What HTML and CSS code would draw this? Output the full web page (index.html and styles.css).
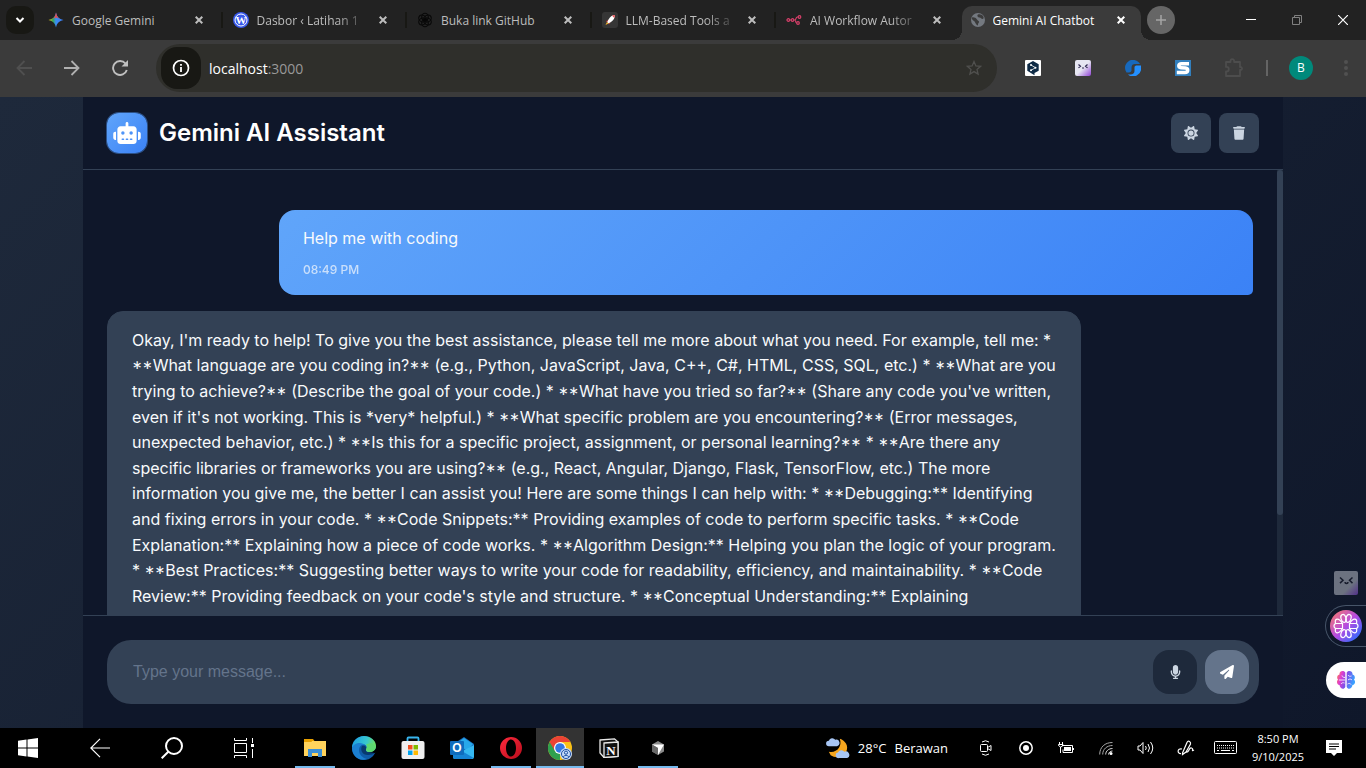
FILE: index.html
```html
<!DOCTYPE html>
<html lang="en">
<head>
<meta charset="utf-8">
<title>Gemini AI Chatbot</title>
<link rel="stylesheet" href="styles.css">
</head>
<body>
<div class="tabstrip">
  <button class="tab-search" aria-label="Search tabs"><svg width="10" height="8" viewBox="0 0 10 8"><path d="M1.500 2 5 5.500 8.500 2" fill="none" stroke="#fff" stroke-width="2"/></svg></button>
  <div class="tabs">
    <div class="tab">
      <svg class="favicon" viewBox="0 0 16 16"><defs><linearGradient id="gem" x1="0" y1="0" x2="1" y2="0"><stop offset="0" stop-color="#f5c518"/><stop offset=".3" stop-color="#34a853"/><stop offset=".5" stop-color="#3b8cf7"/><stop offset="1" stop-color="#3b7bf0"/></linearGradient></defs><path d="M8 .5C9 5 11 7 15.500 8 11 9 9 11 8 15.500 7 11 5 9 .5 8 5 7 7 5 8 .5z" fill="url(#gem)"/><path d="M8 .5C9 5 10 6 12 7L8 5.500 4.500 7C6.500 6 7.500 4 8 .5z" fill="#ea4a4a"/></svg>
      <span class="tab-title">Google Gemini</span>
      <button class="tab-close" aria-label="Close tab"><svg width="8" height="8" viewBox="0 0 8 8"><path d="M.7.7l6.600 6.600M7.300.7L.7 7.300"/></svg></button>
    </div>
    <div class="tab">
      <svg class="favicon" viewBox="0 0 16 16"><circle cx="8" cy="8" r="8" fill="#3858e9"/><circle cx="8" cy="8" r="6" fill="none" stroke="#fff" stroke-width="1"/><text x="8" y="12" text-anchor="middle" font-size="11" font-weight="700" font-family="Liberation Serif, serif" fill="#fff">W</text></svg>
      <span class="tab-title fade">Dasbor ‹ Latihan 1</span>
      <button class="tab-close" aria-label="Close tab"><svg width="8" height="8" viewBox="0 0 8 8"><path d="M.7.7l6.600 6.600M7.300.7L.7 7.300"/></svg></button>
    </div>
    <div class="tab">
      <svg class="favicon" viewBox="0 0 16 16"><g fill="none" stroke="#080808" stroke-width="1.100"><ellipse cx="8" cy="5" rx="3.300" ry="3.800"/><ellipse cx="8" cy="5" rx="3.300" ry="3.800" transform="rotate(60 8 8)"/><ellipse cx="8" cy="5" rx="3.300" ry="3.800" transform="rotate(120 8 8)"/><ellipse cx="8" cy="5" rx="3.300" ry="3.800" transform="rotate(180 8 8)"/><ellipse cx="8" cy="5" rx="3.300" ry="3.800" transform="rotate(240 8 8)"/><ellipse cx="8" cy="5" rx="3.300" ry="3.800" transform="rotate(300 8 8)"/></g></svg>
      <span class="tab-title">Buka link GitHub</span>
      <button class="tab-close" aria-label="Close tab"><svg width="8" height="8" viewBox="0 0 8 8"><path d="M.7.7l6.600 6.600M7.300.7L.7 7.300"/></svg></button>
    </div>
    <div class="tab">
      <svg class="favicon" viewBox="0 0 16 16"><rect width="16" height="16" rx="3" fill="#363636"/><path d="M13 3c-3 0-5 2-6.500 4.500L5 10l1.500 1.500L9 10c2.500-2 4-4 4-7z" fill="#fff"/><path d="M13 3l-3 .6L12.300 6z" fill="#e5484d"/><path d="M6 7.500L4 9.500 5 10zM8.500 10.500L7 12.500l-.5-1z" fill="#d33"/><path d="M5 10l1.500 1.500L3.500 13z" fill="#f5b52e"/></svg>
      <span class="tab-title fade">LLM-Based Tools a</span>
      <button class="tab-close" aria-label="Close tab"><svg width="8" height="8" viewBox="0 0 8 8"><path d="M.7.7l6.600 6.600M7.300.7L.7 7.300"/></svg></button>
    </div>
    <div class="tab">
      <svg class="favicon" viewBox="0 0 16 16"><g fill="none" stroke="#d9406b" stroke-width="1.200"><circle cx="2.300" cy="8" r="1.300"/><circle cx="6.500" cy="8" r="1.300"/><circle cx="13.500" cy="5" r="1.300"/><circle cx="12" cy="11" r="1.300"/><path d="M3.600 8h1.600M7.800 8h1c1.500 0 .8-3 2.500-3h.9M8.800 8c1.200 0 .5 3 1.900 3"/></g></svg>
      <span class="tab-title fade">AI Workflow Autor</span>
      <button class="tab-close" aria-label="Close tab"><svg width="8" height="8" viewBox="0 0 8 8"><path d="M.7.7l6.600 6.600M7.300.7L.7 7.300"/></svg></button>
    </div>
    <div class="tab tab-active">
      <svg class="favicon" viewBox="0 0 16 16"><circle cx="7" cy="8" r="7" fill="#747980"/><path d="M1 5.500C3 5 5 6 6 7.500s1.500 1 2 2-1 1.500-1 3-1 1-2-.5-1-2.500-2-3-2.500-2-2-3.500zM7 2.500c1.500-.8 4 0 5 1.500s.8 3-.5 3-1.500-1.500-3-1.500-3-2-1.500-3z" fill="#3b3b3b"/></svg>
      <span class="tab-title">Gemini AI Chatbot</span>
      <button class="tab-close" aria-label="Close tab"><svg width="8" height="8" viewBox="0 0 8 8"><path d="M.7.7l6.600 6.600M7.300.7L.7 7.300"/></svg></button>
    </div>
  </div>
  <button class="new-tab" aria-label="New tab"><svg width="10" height="10" viewBox="0 0 10 10"><path d="M5 0v10M0 5h10" stroke="#a5a5a5" stroke-width="1.500"/></svg></button>
  <div class="window-controls">
    <button aria-label="Minimize"><svg width="10" height="10" viewBox="0 0 10 10"><path d="M0 4.500h10" stroke="#fff"/></svg></button>
    <button aria-label="Restore"><svg width="10" height="10" viewBox="0 0 10 10"><path d="M.5 2.500h7v7h-7zM2.500 2.500v-2h7v7h-2" fill="none" stroke="#808080"/></svg></button>
    <button aria-label="Close"><svg width="10" height="10" viewBox="0 0 10 10"><path d="M0 0l10 10M10 0L0 10" stroke="#fff" stroke-width="1.200"/></svg></button>
  </div>
</div>

<div class="toolbar">
  <button class="nav" aria-label="Back"><svg width="16" height="16" viewBox="0 0 16 16" fill="none" stroke="#505050" stroke-width="1.800"><path d="M16 8H1.500M8.500 1L1.500 8l7 7"/></svg></button>
  <button class="nav" aria-label="Forward"><svg width="16" height="16" viewBox="0 0 16 16" fill="none" stroke="#b0b0b0" stroke-width="1.800"><path d="M0 8h14.500M7.500 1l7 7-7 7"/></svg></button>
  <button class="nav" aria-label="Reload"><svg width="16" height="16" viewBox="0 0 16 16"><path d="M14.800 10A7 7 0 1 1 13.500 3.500" fill="none" stroke="#c0c0c0" stroke-width="1.900"/><path d="M16 0v6.500H9.500z" fill="#c0c0c0"/></svg></button>
  <div class="omnibox">
    <button class="site-info" aria-label="Site information"><svg width="18" height="18" viewBox="0 0 18 18"><circle cx="9" cy="9" r="7.500" fill="none" stroke="#fff" stroke-width="1.700"/><path d="M9 8v5M9 5v1.800" stroke="#fff" stroke-width="1.800"/></svg></button>
    <div class="url">localhost<span>:3000</span></div>
    <button class="star" aria-label="Bookmark"><svg width="16" height="16" viewBox="0 0 16 16"><path d="M8 1.500l1.900 4.400 4.700.4-3.600 3.100 1.100 4.700L8 11.600l-4.100 2.500L5 9.400 1.400 6.300l4.700-.4z" fill="none" stroke="#50504e" stroke-width="1.300"/></svg></button>
  </div>
  <div class="extensions">
    <button aria-label="Translate"><svg width="16" height="16" viewBox="0 0 16 16"><rect width="16" height="16" rx="1" fill="#fff"/><path d="M8 1l5.700 3.200v6.500L9.500 13v2.300L2.300 10.700V4.200z" fill="#0f2b46"/><path d="M6 5l4.500 2.700L6 10.300" fill="none" stroke="#fff" stroke-width=".8"/><circle cx="6" cy="5" r="1" fill="#fff"/><circle cx="10.500" cy="7.700" r="1" fill="#fff"/><circle cx="6" cy="10.200" r="1" fill="#fff"/></svg></button>
    <button aria-label="Companion"><svg width="16" height="16" viewBox="0 0 16 16"><defs><linearGradient id="face" x1="0" y1="0" x2="1" y2="1"><stop offset=".5" stop-color="#e6e6f2"/><stop offset="1" stop-color="#9143d6"/></linearGradient></defs><rect width="16" height="16" rx="2" fill="url(#face)"/><path d="M3.500 4.500l2 1.700-2 1.700M12.500 4.500l-2 1.700 2 1.700M7 8h2" fill="none" stroke="#2d2750" stroke-width="1.200"/></svg></button>
    <button aria-label="Sync"><svg width="16" height="16" viewBox="0 0 16 16"><path d="M14 2.500A8 8 0 0 0 .5 10.500L1.500 12.500H4C5.500 12.500 6.500 11.500 6.500 10V7.500C6.500 5 8 4 10 4H15z" fill="#1769bd"/><path d="M16 5.500H11.500C10 5.500 9.500 6.500 9.500 7.500V11c0 2-1.500 3.500-4 3.500H3A8 8 0 0 0 16 7z" fill="#2490ff"/></svg></button>
    <button aria-label="Notes"><svg width="16" height="16" viewBox="0 0 16 16"><rect width="16" height="16" fill="#327fbd"/><path d="M14 3.800H6.500C3 3.800 3 7.500 6 7.700l4.500.4c3 .3 3 4.400-.5 4.400H1.800" fill="none" stroke="#fff" stroke-width="3.500"/></svg></button>
    <button aria-label="Extensions"><svg width="20" height="20" viewBox="0 0 20 20"><path d="M3 4h4.500V3a1.800 1.800 0 0 1 3.600 0v1H17v5h1a1.600 1.600 0 0 1 0 3h-1v6H3v-4.500h.5a2.300 2.300 0 0 0 0-4.600H3z" fill="none" stroke="#4d4d4d" stroke-width="1.800" stroke-linejoin="round"/></svg></button>
  </div>
  <span class="divider"></span>
  <button class="profile" aria-label="Profile"><span>B</span></button>
  <button class="menu" aria-label="Menu"><svg width="4" height="16" viewBox="0 0 4 16" fill="#515151"><circle cx="2" cy="2" r="2"/><circle cx="2" cy="8" r="2"/><circle cx="2" cy="14" r="2"/></svg></button>
</div>

<main class="page">
  <section class="app">
    <header class="app-header">
      <div class="brand">
        <span class="logo"><svg width="28" height="22" viewBox="0 0 640 512" fill="#fff"><path d="M320 0c17.700 0 32 14.300 32 32V96H472c39.800 0 72 32.200 72 72V440c0 39.800-32.200 72-72 72H168c-39.800 0-72-32.200-72-72V168c0-39.800 32.200-72 72-72H288V32c0-17.700 14.300-32 32-32zM208 384c-8.800 0-16 7.200-16 16s7.200 16 16 16h32c8.800 0 16-7.200 16-16s-7.200-16-16-16H208zm96 0c-8.800 0-16 7.200-16 16s7.200 16 16 16h32c8.800 0 16-7.200 16-16s-7.200-16-16-16H304zm96 0c-8.800 0-16 7.200-16 16s7.200 16 16 16h32c8.800 0 16-7.200 16-16s-7.200-16-16-16H400zM264 256a40 40 0 1 0 -80 0 40 40 0 1 0 80 0zm152 40a40 40 0 1 0 0-80 40 40 0 1 0 0 80zM48 224H64V416H48c-26.500 0-48-21.500-48-48V272c0-26.500 21.500-48 48-48zm544 0c26.500 0 48 21.500 48 48v96c0 26.500-21.500 48-48 48H576V224h16z"/></svg></span>
        <h1>Gemini AI Assistant</h1>
      </div>
      <div class="header-actions">
        <button aria-label="Toggle theme"><svg width="14" height="14" viewBox="0 0 512 512" fill="#cbd5e1"><path d="M361.500 1.200c5 2.100 8.600 6.600 9.600 11.900L391 121l107.900 19.800c5.300 1 9.800 4.600 11.900 9.600s1.500 10.700-1.600 15.200L446.900 256l62.300 90.300c3.100 4.500 3.700 10.200 1.600 15.200s-6.600 8.600-11.900 9.600L391 391 371.100 498.900c-1 5.300-4.600 9.800-9.600 11.900s-10.700 1.500-15.200-1.600L256 446.900l-90.300 62.300c-4.500 3.100-10.200 3.700-15.200 1.600s-8.600-6.600-9.600-11.900L121 391 13.100 371.100c-5.300-1-9.800-4.600-11.900-9.600s-1.500-10.700 1.600-15.200L65.100 256 2.800 165.700c-3.100-4.500-3.700-10.200-1.600-15.200s6.600-8.600 11.900-9.600L121 121 140.900 13.100c1-5.300 4.600-9.800 9.600-11.900s10.700-1.500 15.200 1.600L256 65.100 346.300 2.800c4.500-3.100 10.200-3.700 15.200-1.600zM160 256a96 96 0 1 1 192 0 96 96 0 1 1 -192 0zm224 0a128 128 0 1 0 -256 0 128 128 0 1 0 256 0z"/></svg></button>
        <button aria-label="Clear chat"><svg width="12" height="14" viewBox="0 0 448 512" fill="#cbd5e1"><path d="M135.200 17.700L128 32H32C14.300 32 0 46.300 0 64S14.300 96 32 96H416c17.700 0 32-14.300 32-32s-14.300-32-32-32H320l-7.200-14.300C307.400 6.800 296.300 0 284.200 0H163.800c-12.100 0-23.200 6.800-28.600 17.700zM416 128H32L53.200 467c1.600 25.300 22.600 45 47.900 45H346.900c25.300 0 46.300-19.700 47.900-45L416 128z"/></svg></button>
      </div>
    </header>
    <div class="chat">
      <div class="messages">
        <article class="message message-user">
          <p>Help me with coding</p>
          <time>08:49 PM</time>
        </article>
        <article class="message message-bot">
          <p>Okay, I'm ready to help! To give you the best assistance, please tell me more about what you need. For example, tell me: * <b>**</b>What language are you coding in?<b>**</b> (e.g., Python, JavaScript, Java, C++, C#, HTML, CSS, SQL, etc.) * <b>**</b>What are you trying to achieve?<b>**</b> (Describe the goal of your code.) * <b>**</b>What have you tried so far?<b>**</b> (Share any code you've written, even if it's not working. This is *very* helpful.) * <b>**</b>What specific problem are you encountering?<b>**</b> (Error messages, unexpected behavior, etc.) * <b>**</b>Is this for a specific project, assignment, or personal learning?<b>**</b> * <b>**</b>Are there any specific libraries or frameworks you are using?<b>**</b> (e.g., React, Angular, Django, Flask, TensorFlow, etc.) The more information you give me, the better I can assist you! Here are some things I can help with: * <b>**</b>Debugging:** Identifying and fixing errors in your code. * <b>**</b>Code Snippets:** Providing examples of code to perform specific tasks. * <b>**</b>Code Explanation:** Explaining how a piece of code works. * <b>**</b>Algorithm Design:** Helping you plan the logic of your program. * <b>**</b>Best Practices:** Suggesting better ways to write your code for readability, efficiency, and maintainability. * <b>**</b>Code Review:** Providing feedback on your code's style and structure. * <b>**</b>Conceptual Understanding:** Explaining</p>
        </article>
      </div>
      <div class="scrollbar"><span class="thumb"></span></div>
    </div>
    <form class="composer">
      <div class="composer-box">
        <input type="text" aria-label="Message" placeholder="Type your message...">
        <button type="button" class="mic" aria-label="Voice input"><svg width="11" height="14" viewBox="0 0 384 512" fill="#cbd5e1"><path d="M192 0C139 0 96 43 96 96V256c0 53 43 96 96 96s96-43 96-96V96c0-53-43-96-96-96zM64 216c0-13.300-10.700-24-24-24s-24 10.700-24 24v40c0 89.100 66.200 162.700 152 174.400V464H120c-13.300 0-24 10.700-24 24s10.700 24 24 24h72 72c13.300 0 24-10.700 24-24s-10.700-24-24-24H216V430.400c85.800-11.700 152-85.300 152-174.400V216c0-13.300-10.700-24-24-24s-24 10.700-24 24v40c0 70.700-57.300 128-128 128s-128-57.300-128-128V216z"/></svg></button>
        <button type="button" class="send" aria-label="Send"><svg width="14" height="14" viewBox="0 0 512 512" fill="#fff"><path d="M498.100 5.600c10.100 7 15.400 19.100 13.500 31.200l-64 416c-1.500 9.700-7.400 18.200-16 23s-18.900 5.400-28 1.600L284 427.700l-68.500 74.100c-8.900 9.700-22.900 12.900-35.200 8.100S160 493.200 160 480V396.400c0-4 1.500-7.800 4.200-10.700L331.800 202.800c5.800-6.300 5.600-16-.4-22s-15.700-6.400-22-.7L106 360.800 17.700 316.600C7.100 311.300 .3 300.700 0 288.900s5.900-22.800 16.100-28.700l448-256c10.700-6.100 23.900-5.500 34 1.400z"/></svg></button>
      </div>
    </form>
  </section>
  <aside class="widgets">
    <button class="widget-face" aria-label="Companion"><svg width="24" height="24" viewBox="0 0 24 24"><defs><linearGradient id="dimface" x1="0" y1="0" x2="1" y2="1"><stop offset=".65" stop-color="#6c7280"/><stop offset="1" stop-color="#51308a"/></linearGradient></defs><rect width="24" height="24" rx="2" fill="url(#dimface)"/><path d="M6 6.500l3 2.800-3 2.800M18.500 6.500l-3 2.800 3 2.800M11 11c0 2 3 2 3 0" fill="none" stroke="#171c2c" stroke-width="1.500"/></svg></button>
    <button class="widget-ring" aria-label="Assistant"><svg width="32" height="32" viewBox="0 0 32 32"><defs><linearGradient id="orb" x1="0" y1="0" x2="1" y2="1"><stop offset=".1" stop-color="#f0747c"/><stop offset=".5" stop-color="#b64be0"/><stop offset=".9" stop-color="#2d6bff"/></linearGradient></defs><circle cx="16" cy="16" r="16" fill="url(#orb)"/><g fill="none" stroke="#fff" stroke-width="1.200"><ellipse cx="16" cy="8" rx="2.500" ry="4" transform="rotate(18 16 16)"/><ellipse cx="16" cy="8" rx="2.500" ry="4" transform="rotate(-18 16 16)"/><ellipse cx="16" cy="8" rx="2.500" ry="4" transform="rotate(162 16 16)"/><ellipse cx="16" cy="8" rx="2.500" ry="4" transform="rotate(198 16 16)"/><path d="M12.500 13.500V18.500H6.500a2.500 2.500 0 0 1 0-5zM19.500 13.500V18.500H25.500a2.500 2.500 0 0 0 0-5zM5.500 13.500C4.500 9 8 6.500 12.500 13.500M5.500 18.500C4.500 23 8 25.500 12.500 18.500M26.500 13.500C27.500 9 24 6.500 19.500 13.500M26.500 18.500C27.500 23 24 25.500 19.500 18.500"/></g></svg></button>
    <button class="widget-brain" aria-label="Brain assistant"><svg width="20" height="20" viewBox="0 0 20 20"><defs><linearGradient id="brain" x1="0" y1="0" x2="1" y2=".3"><stop offset="0" stop-color="#ff8a3c"/><stop offset=".3" stop-color="#e03bd0"/><stop offset=".6" stop-color="#7b50e8"/><stop offset="1" stop-color="#3aa0ff"/></linearGradient></defs><path d="M9.300 2.500C7-.5 3 1.500 3.500 4.500 1 5 .5 8 2 9.500c-2 2-1 5 1.500 5.500.5 4 4.500 5 5.800 2zM10.700 2.500C13-.5 17 1.500 16.500 4.500c2.500.5 3 3.500 1.500 5 2 2 1 5-1.500 5.500-.5 4-4.500 5-5.800 2z" fill="url(#brain)"/><path d="M3 10h6M6 5.500c0 1.500 1.500 2 3 2M5 14c1-1.500 2-1.500 3.500-1M12 5c1 1.500 2 1.500 3.500 1M12 10c1.500-1.500 3-1 4 0M11.500 14c1.500-1 3-.5 3.500.5" fill="none" stroke="#f4ddff" stroke-width="1"/></svg></button>
  </aside>
</main>

<footer class="taskbar">
  <div class="system">
    <button aria-label="Start"><svg width="20" height="20" viewBox="0 0 20 20" fill="#fff"><path d="M0 2.800L8.500 1.600v7.900H0zM9.500 1.500L20 0v9.500H9.500zM0 10.500h8.500v7.900L0 17.200zM9.500 10.500H20V20L9.500 18.500z"/></svg></button>
    <button aria-label="Back"><svg width="20" height="20" viewBox="0 0 20 20" fill="none" stroke="#fff" stroke-width="1.200"><path d="M20 10H1M10 .8L.8 10l9.200 9.200"/></svg></button>
    <button aria-label="Search"><svg width="22" height="22" viewBox="0 0 22 22" fill="none" stroke="#fff" stroke-width="2"><circle cx="13" cy="9" r="8"/><path d="M7.300 14.700L.7 21.300"/></svg></button>
    <button aria-label="Task view"><svg width="20" height="20" viewBox="0 0 20 20" fill="none" stroke="#fff"><path d="M.5 5.500h12v9H.5zM.5 0v2.500h12V0M.5 20v-2.500h12V20M18.500 0v5M18.500 11v9"/><rect x="17" y="6" width="3" height="3" fill="#fff" stroke="none"/></svg></button>
  </div>
  <div class="apps">
    <button class="open" aria-label="File Explorer"><svg width="22" height="20" viewBox="0 0 22 20"><path d="M0 1h9l1.500 2H0z" fill="#e8a000"/><path d="M0 3h22v15H0z" fill="#ffd35c"/><path d="M0 1h9l-1.500 3H0z" fill="#e8a000"/><path d="M4 11h14v8h-4v-4H8v4H4z" fill="#3b8fd6"/></svg></button>
    <button aria-label="Edge"><svg width="24" height="24" viewBox="0 0 24 24"><defs><linearGradient id="edge" x1="0" y1=".2" x2="1" y2=".4"><stop offset="0" stop-color="#1b9de2"/><stop offset=".6" stop-color="#37c6d0"/><stop offset="1" stop-color="#6fe05a"/></linearGradient></defs><circle cx="12" cy="12" r="12" fill="#0f5ba8"/><path d="M0 12C0 5 5.500 0 12 0s12 4.500 12 10c0 4-3 6-6.500 6-3 0-4.500-1-3-3 1-2-.5-5-4.500-5C5 8 1 10 0 12z" fill="url(#edge)"/><path d="M0 12c1-3 4-5 8-5 2 0 4 1 5 2-3-1-6 1-6 5 0 5 4 8 8 9-8 3-15-3-15-11z" fill="#1b7fd1"/><path d="M10 10c-2 4 0 9 6 9 3 0 5-1 7-2l1-7c0 4-3 6-6.500 6-5 0-3-2-3-3 .5-2-2-4-4.500-3z" fill="#08396f"/><path d="M24 10c0 4-3 6-6.500 6l5.500 1 1-1z" fill="#000"/><path d="M14 8.500c2 2 0 4 0 5s1 2.500 3.500 2.500C21 16 24 14 24 10l-5-3z" fill="#5dd870"/></svg></button>
    <button aria-label="Store"><svg width="24" height="24" viewBox="0 0 24 24"><path d="M6.500 6V2.500q0-1 1-1h9q1 0 1 1V6" fill="none" stroke="#38b5ee" stroke-width="1.800"/><rect x=".5" y="5" width="23" height="18" rx="2" fill="#f0f0f0"/><path d="M7 9h4.500v4.500H7z" fill="#f25022"/><path d="M12.500 9H17v4.500h-4.500z" fill="#7fba00"/><path d="M7 14.500h4.500V19H7z" fill="#00a4ef"/><path d="M12.500 14.500H17V19h-4.500z" fill="#ffb900"/></svg></button>
    <button aria-label="Outlook"><svg width="24" height="24" viewBox="0 0 24 24"><path d="M5 7L14 1l10 7v10H5z" fill="#1669b8"/><path d="M7 7l7-5 9 6-6 7z" fill="#28a8ea"/><path d="M3 20l21-11v12q0 2-2 2H5q-2 0-2-2z" fill="#35b8f1"/><path d="M3 10l20 11.500q-1 1.500-3 1.500H5q-2 0-2-2z" fill="#1583d4"/><rect y="5" width="14" height="14" rx="1" fill="#0f6cbd"/><text x="7" y="16" text-anchor="middle" font-size="12" font-weight="700" font-family="Liberation Sans, sans-serif" fill="#fff">O</text></svg></button>
    <button class="open" aria-label="Opera"><svg width="24" height="24" viewBox="0 0 24 24"><defs><linearGradient id="op" x1="0" y1="0" x2="1" y2="1"><stop stop-color="#ff2a3d"/><stop offset="1" stop-color="#b80d1c"/></linearGradient></defs><path d="M12 1a11 11 0 1 0 0 22 11 11 0 0 0 0-22zm0 2.500c3 0 5 3.800 5 8.500s-2 8.500-5 8.500S7 16.700 7 12s2-8.500 5-8.500z" fill="url(#op)" fill-rule="evenodd"/></svg></button>
    <button class="active" aria-label="Chrome"><svg width="24" height="24" viewBox="0 0 24 24"><circle cx="12" cy="12" r="12" fill="#fbc116"/><path d="M1.600 6L12 12l0 12A12 12 0 0 1 1.600 6z" fill="#2fa04e"/><path d="M1.600 6A12 12 0 0 1 22.400 6H12L7 15z" fill="#ea4335"/><circle cx="12" cy="12" r="6" fill="#fff"/><circle cx="12" cy="12" r="4.800" fill="#3478e5"/><circle cx="18" cy="18" r="6" fill="#c8dcfa"/><g fill="none" stroke="#1d4fa0" stroke-width="1"><circle cx="18" cy="18" r="4.500"/><circle cx="18" cy="16.700" r="1.600"/><path d="M15 21c1-2 5-2 6 0"/></g></svg></button>
    <button aria-label="Notion"><svg width="20" height="20" viewBox="0 0 20 20"><path d="M1 2L15.500.8 19 4v14.500l-14 1L1 15z" fill="#111" stroke="#e8e8e8" stroke-width="1.300"/><path d="M5 5l14-1v14.500l-14 1z" fill="#111" stroke="#e8e8e8" stroke-width="1.300"/><text x="12" y="16.500" text-anchor="middle" font-size="13" font-weight="700" font-family="Liberation Serif, serif" fill="#fff">N</text></svg></button>
    <button class="open" aria-label="Cursor"><svg width="12" height="14" viewBox="0 0 12 14"><path d="M6 0l6 3.500v7L6 14 0 10.500v-7z" fill="#8a8a8a"/><path d="M0 3.500h12L6 14V7z" fill="#fff"/><path d="M0 3.500L6 7v7L0 10.500z" fill="#686868"/></svg></button>
  </div>
  <button class="weather">
    <svg width="24" height="22" viewBox="0 0 26 24"><path d="M15 2c6 2 10 8 7 14s-11 8-17 4l-2-4c8 2 15-5 12-14z" fill="#f5a51e"/><g fill="#a8c6f4"><path d="M3 10a3 3 0 0 1 0-6 4 4 0 0 1 7-1 3 3 0 0 1 2 7zM14 23a3 3 0 0 1-1-6 4 4 0 0 1 7-1 3.500 3.500 0 0 1 3 7z"/></g></svg>
    <span>28°C</span><span>Berawan</span>
  </button>
  <div class="tray">
    <button aria-label="Meet now"><svg width="12" height="16" viewBox="0 0 12 16" fill="none" stroke="#fff"><rect x=".5" y="4.500" width="7" height="7" rx="1"/><path d="M7.500 7.500L11 5.500v5L7.500 8.500M2 2q3.500-2.500 7 0M2 14q3.500 2.500 7 0"/></svg></button>
    <button aria-label="Recorder"><svg width="14" height="14" viewBox="0 0 14 14"><circle cx="7" cy="7" r="6.200" fill="none" stroke="#fff" stroke-width="1.500"/><circle cx="7" cy="7" r="3" fill="#fff"/></svg></button>
    <button aria-label="Battery"><svg width="16" height="12" viewBox="0 0 16 12"><path d="M4 3.500h10.500v7H5v-3M15.500 6v2M1.500 0v2M4.500 0v2M.5 2.500h4.500v1L3 5H2.500L.5 3.500zM2.500 5v6" fill="none" stroke="#fff"/><path d="M6 5h7v4H6z" fill="#fff"/></svg></button>
    <button aria-label="Wi-Fi"><svg width="14" height="14" viewBox="0 0 14 14" fill="none"><path d="M.7 13.500C.7 6 6 1.500 13.500 1.500M3.700 13.500C3.700 8 8 4.500 13.500 4.500" stroke="#a8a8a8"/><path d="M6.700 13.500c0-3.500 3-6 6.800-6M9.500 13.500c0-2 2-3.500 4-3.500" stroke="#ddd"/><circle cx="12" cy="12.500" r="1.500" fill="#fff"/></svg></button>
    <button aria-label="Volume"><svg width="18" height="14" viewBox="0 0 18 14" fill="none" stroke="#fff"><path d="M1 5h2l3-3.500v11L3 9H1zM8.500 5q1.500 2 0 4M11 3q3 4 0 8M13.500 1q4.500 6 0 12"/></svg></button>
    <button aria-label="Pen"><svg width="18" height="16" viewBox="0 0 18 16" fill="none" stroke="#fff" stroke-width="1.200"><path d="M5 9C0 8 0 14 4 13.500M5.500 13L10 2.500q1-2 2.500-1t1 2.500L9 12l-3.500 2.500zM9.500 12c3 1 2-5 5-4s-1 4 2.500 2"/></svg></button>
    <button aria-label="Keyboard"><svg width="24" height="14" viewBox="0 0 24 14" fill="none" stroke="#fff"><rect x=".5" y=".5" width="22" height="12" rx="1"/><path d="M3 4.500h18M3 7h18" stroke-dasharray="1 1"/><path d="M3 9.500h2M7 9.500h9M18 9.500h2"/></svg></button>
    <button class="clock"><span>8:50 PM</span><span>9/10/2025</span></button>
    <button class="notice" aria-label="Notifications"><svg width="16" height="16" viewBox="0 0 16 16"><path d="M0 0h16v13h-5l-3 3-3-3H0z" fill="#fff"/><path d="M3 4h10M3 6.500h10M3 9h7" stroke="#000"/></svg></button>
  </div>
</footer>
</body>
</html>
```

FILE: styles.css
```css
* { box-sizing: border-box; }

body {
  margin: 0;
  height: 100vh;
  display: flex;
  flex-direction: column;
  overflow: hidden;
  background: #000;
  font-family: "Open Sans", "Noto Sans", sans-serif;
}

button {
  margin: 0;
  padding: 0;
  border: 0;
  background: none;
  color: inherit;
  font: inherit;
  display: flex;
  align-items: center;
  justify-content: center;
  flex: none;
}

svg { display: block; flex: none; }

/* Browser tabs */
.tabstrip {
  height: 40px;
  flex: none;
  display: flex;
  align-items: center;
  padding-left: 6px;
  background: #222;
}

.tab-search {
  width: 28px;
  height: 28px;
  border-radius: 10px;
  background: #181814;
}

.tabs {
  flex: 0 1 1102px;
  min-width: 0;
  align-self: flex-end;
  display: flex;
  gap: 7px;
  margin-left: 5px;
}

.tab {
  position: relative;
  flex: 1 1 0;
  min-width: 0;
  height: 34px;
  display: flex;
  align-items: center;
  padding: 0 10px 6px 9px;
  color: #bdbdbd;
  font-size: 12px;
}

.tab:nth-child(-n+4)::after {
  content: "";
  position: absolute;
  top: 6px;
  right: -6px;
  width: 2px;
  height: 16px;
  background: #181814;
}

.tab-active {
  background: #3b3b3b;
  border-radius: 10px 10px 0 0;
  color: #fff;
}

.tab-active::before,
.tab-active::after {
  content: "";
  position: absolute;
  bottom: 0;
  width: 10px;
  height: 10px;
}

.tab-active::before {
  right: 100%;
  background: radial-gradient(circle at 0 0, #222 10px, #3b3b3b 10px);
}

.tab-active::after {
  left: 100%;
  background: radial-gradient(circle at 100% 0, #222 10px, #3b3b3b 10px);
}

.favicon { width: 16px; height: 16px; }

.tab-title {
  flex: 1;
  min-width: 0;
  margin: 0 12px 0 8px;
  overflow: hidden;
  white-space: nowrap;
}

.fade { mask-image: linear-gradient(to right, #000 75%, rgba(0, 0, 0, 0.2)); }

.tab-active { padding-right: 12px; }
.tab-active .tab-title { margin-left: 6px; }

.tab-close { width: 16px; height: 16px; }
.tab-close path { fill: none; stroke: currentColor; stroke-width: 2; }

.new-tab {
  width: 28px;
  height: 28px;
  margin-left: 6px;
  border-radius: 50%;
  background: #666;
}

.window-controls {
  display: flex;
  margin-left: auto;
}

.window-controls button { width: 46px; height: 40px; }

/* Browser toolbar */
.toolbar {
  height: 57px;
  flex: none;
  display: flex;
  align-items: center;
  padding-bottom: 1px;
  background: #3b3b3b;
}

.nav { width: 48px; height: 48px; }

.omnibox {
  flex: 1;
  min-width: 0;
  height: 48px;
  display: flex;
  align-items: center;
  margin-left: 12px;
  padding: 0 15px 0 5px;
  border-radius: 24px;
  background: #2f2f2b;
}

.site-info {
  width: 40px;
  height: 42px;
  border-radius: 16px;
  background: #181814;
}

.url {
  flex: 1;
  margin-left: 8px;
  color: #fff;
  font-size: 14px;
}

.url span { color: #999; }

.extensions { display: flex; margin-left: 11px; }
.extensions button { width: 50px; height: 48px; }

.divider {
  width: 2px;
  height: 16px;
  margin: 0 8px;
  background: #646464;
}

.profile { width: 50px; }

.profile span {
  width: 24px;
  height: 24px;
  border-radius: 50%;
  background: #00897b;
  color: #fff;
  font-size: 12px;
  line-height: 24px;
}

.menu { width: 40px; height: 48px; }

/* Chat page */
.page {
  position: relative;
  flex: 1;
  min-height: 0;
  display: flex;
  justify-content: center;
  background: linear-gradient(135deg, #1e293b, #0f172a);
  font-family: Inter, "Liberation Sans", sans-serif;
}

.app {
  flex: 1;
  min-width: 0;
  max-width: 1200px;
  display: flex;
  flex-direction: column;
  background: #0f172a;
}

.app-header {
  flex: none;
  display: flex;
  align-items: center;
  justify-content: space-between;
  padding: 16px 24px;
  border-bottom: 1px solid #334155;
}

.brand { display: flex; align-items: center; gap: 12px; }

.logo {
  width: 40px;
  height: 40px;
  display: flex;
  align-items: center;
  justify-content: center;
  border-radius: 12px;
  background: linear-gradient(135deg, #60a5fa, #3b82f6);
  box-shadow: 0 0 0 1px #2d5288;
}

h1 {
  margin: 0;
  color: #fff;
  font-size: 24px;
  font-weight: 600;
  line-height: 32px;
}

.header-actions { display: flex; gap: 8px; }

.header-actions button {
  width: 40px;
  height: 40px;
  border-radius: 8px;
  background: #334155;
}

.chat {
  flex: 1;
  min-height: 0;
  display: flex;
}

.messages {
  flex: 1;
  min-width: 0;
  display: flex;
  flex-direction: column;
  gap: 16px;
  padding: 40px 24px;
  overflow: hidden;
}

.message {
  flex: none;
  width: 85%;
  padding: 16px 24px;
  border-radius: 16px;
  color: #f8fafc;
  font-size: 16px;
  line-height: 1.6;
}

.message p { margin: 0; }

.message b {
  font-weight: 400;
  font-feature-settings: "case";
}

.message-user {
  align-self: flex-end;
  border-bottom-right-radius: 5px;
  background: linear-gradient(135deg, #60a5fa, #3b82f6);
}

.message-user time {
  display: block;
  margin-top: 8px;
  font-size: 12px;
  font-weight: 500;
  opacity: 0.7;
}

.message-bot {
  padding-bottom: 48px;
  border: 1px solid #334155;
  background: #334155;
}

.scrollbar {
  flex: none;
  width: 6px;
  background: #1e293b;
}

.thumb {
  display: block;
  height: 77.5%;
  border-radius: 3px;
  background: #334155;
}

.composer {
  flex: none;
  padding: 24px;
  border-top: 1px solid #334155;
}

.composer-box {
  display: flex;
  align-items: center;
  gap: 8px;
  padding: 10px 10px 10px 26px;
  border-radius: 24px;
  background: #334155;
}

.composer input {
  flex: 1;
  min-width: 0;
  padding: 0;
  border: 0;
  outline: 0;
  background: none;
  color: #f8fafc;
  font: 16px "Liberation Sans", sans-serif;
}

.composer input::placeholder { color: #64748b; }

.composer button {
  width: 44px;
  height: 44px;
  border-radius: 16px;
}

.mic { background: #1e293b; }
.send { background: #64748b; }

/* Floating extension widgets */
.widgets {
  position: absolute;
  right: 0;
  bottom: 30px;
  display: flex;
  flex-direction: column;
  align-items: flex-end;
}

.widget-face { margin: 0 8px 10px 0; }

.widget-ring {
  width: 41px;
  height: 42px;
  margin-bottom: 15px;
  border: 1px solid #475569;
  border-right: 0;
  border-radius: 21px 0 0 21px;
  background: #0f172a;
}

.widget-brain {
  width: 40px;
  height: 36px;
  border-radius: 18px 0 0 18px;
  background: #fff;
}

/* Taskbar */
.taskbar {
  height: 40px;
  flex: none;
  display: flex;
  background: #000;
  color: #fff;
}

.taskbar button { height: 40px; }

.system {
  display: flex;
  gap: 24px;
  padding-left: 4px;
}

.system button,
.apps button { width: 48px; }

.apps {
  display: flex;
  gap: 1px;
  margin-left: 23px;
}

.apps button { position: relative; }

.apps .open::after,
.apps .active::after {
  content: "";
  position: absolute;
  right: 4px;
  bottom: 0;
  left: 4px;
  height: 2px;
  background: #76b9ed;
}

.apps .active { background: #333; }
.apps .active::after { right: 0; left: 0; }

.weather {
  gap: 8px;
  margin-left: auto;
  padding-right: 18px;
  font-size: 13px;
}

.tray {
  display: flex;
  padding-right: 8px;
}

.tray button { width: 40px; }

.tray .clock {
  width: 64px;
  flex-direction: column;
  font-size: 11px;
  line-height: 18px;
}

.tray .notice { width: 48px; }
```
